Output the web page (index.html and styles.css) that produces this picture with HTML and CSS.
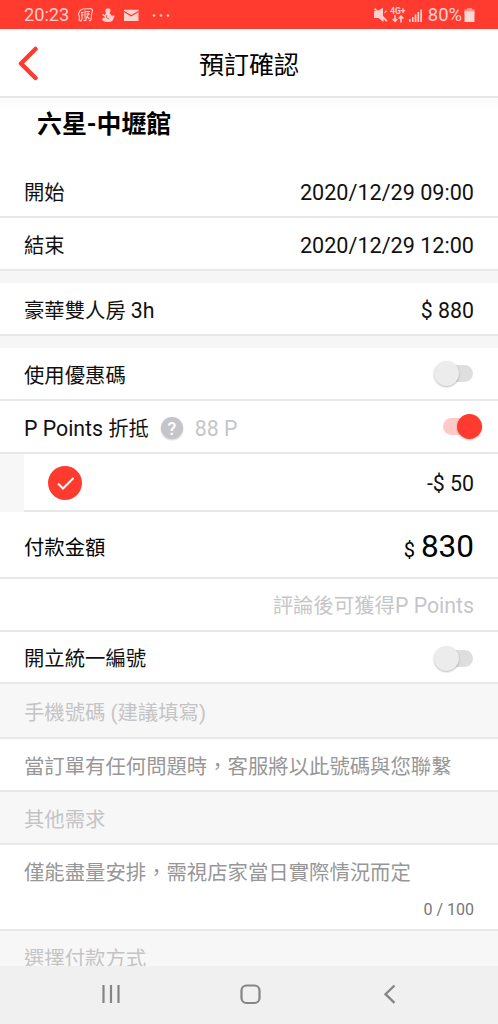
FILE: index.html
```html
<!DOCTYPE html>
<html lang="zh-Hant">
<head>
<meta charset="utf-8">
<title>預訂確認</title>
<link rel="stylesheet" href="styles.css">
</head>
<body>
<div class="screen">
  <div class="status">
    <span class="clock">20:23</span>
    <svg class="status-left" width="96" height="18" viewBox="0 0 96 18" fill="none" stroke="#ffd0cc" stroke-width="1.1">
      <path d="M3 4.500 6 3l8-.5 1.500 1.500-1 5-.5 5-2 1M3 4.500 1.500 8l1 3-.5 3 2 1 1-2M4 6.500h2.500M4 9h2.500M5 6.500V13M8 4.500v8M8.500 5.500h4.500M9 8h4M11 5v4l-2.500 5M9.500 10l3 3M6.500 14.500h3"/>
      <path fill="#ffd0cc" stroke="none" d="M31 2.300c1.600 0 2.500 1 2.500 2.200 0 1.200-.9 1.800-.7 2.700l2.500 3.300c.5-.4.600-1 .4-1.500l1.700 1c.2 1-.2 1.700-.9 2.200 0 2.400-2 3.800-5 3.800-4.300 0-6.300-1.200-6.300-2.700 0-1.200 1.300-1.900 2.900-1.900l-1.300-1.400c-1.500-.1-1.800-1.500-.8-2.300l1.900 1.400 1-2c-.4-.8-.6-1.500-.5-2.500.2-1.400 1.200-2.300 2.600-2.300z"/>
      <path stroke="#ff3b30" stroke-width=".8" d="m30 9-1 2.200 3 1.800"/>
      <path fill="#ffd0cc" stroke="none" d="M47 3.700h14.500V15H47z"/>
      <path stroke="#ff3b30" stroke-width="1.300" d="m47 5.500 7.200 4.300 7.300-4.300"/>
      <g fill="#ffd0cc" stroke="none"><circle cx="77" cy="9.500" r="1.300"/><circle cx="84" cy="9.500" r="1.300"/><circle cx="91" cy="9.500" r="1.300"/></g>
    </svg>
    <span class="spacer"></span>
    <svg class="mute" width="15" height="18" viewBox="0 0 15 18" fill="#ffd0cc"><path d="M1 5h1.800l7.700 8v3L5.500 12H1zM4.500 5 10 1.800V10.500zM11.500 6l2-2v1.500L11.500 7.500zM2.200 2 14.500 14.500l-1.300 1.300L1 3.300z"/></svg>
    <div class="network"><span>4G+</span>
      <svg width="12" height="8" viewBox="0 0 12 8" fill="none" stroke="#ffd0cc" stroke-width="1.600"><path d="M3 0v6.500M.7 4 3 6.300 5.300 4M9 7.500V1M6.700 3.500 9 1.200l2.300 2.300"/></svg>
    </div>
    <svg width="14" height="18" viewBox="0 0 14 18" fill="#ffd0cc"><path d="M0 13h1.600v3H0zM3 11h1.600v5H3zM5.700 8.500h1.700V16H5.700zM8.500 6h1.700v10H8.500zM11.300 3.500H13V16h-1.700z"/></svg>
    <span class="percent">80%</span>
    <svg class="battery" width="11" height="18" viewBox="0 0 11 18"><path fill="#ff9992" d="M3 2h5v1.500h2.500V7H.5V3.500H3z"/><path fill="#ffd8d5" d="M.5 5.500h10V16H.5z"/></svg>
  </div>
  <div class="header">
    <svg class="back" width="24" height="36" viewBox="0 0 24 36" fill="none" stroke="#ff3b30" stroke-width="4.500" stroke-linecap="round" stroke-linejoin="round"><path d="M19.500 3 5 17.500 19.500 32"/></svg>
    <span class="title">預訂確認</span>
  </div>
  <div class="store">六星-中壢館</div>
  <div class="row start"><span>開始</span><span class="date">2020/12/29 09:00</span></div>
  <div class="row end"><span>結束</span><span class="date">2020/12/29 12:00</span></div>
  <div class="gap"></div>
  <div class="row room"><span>豪華雙人房 <span class="latin">3h</span></span><span class="latin">$ 880</span></div>
  <div class="gap"></div>
  <div class="row coupon"><span class="label">使用優惠碼</span><i class="switch"></i></div>
  <div class="row points">
    <span class="label"><span class="latin">P Points</span> 折抵</span>
    <b class="help">?</b>
    <span class="balance latin">88 P</span>
    <i class="switch on"></i>
  </div>
  <div class="nested">
    <div class="row discount">
      <svg width="34" height="34" viewBox="0 0 34 34"><circle cx="17" cy="17" r="17" fill="#ff3b30"/><path d="m10 17.500 5 5 10.500-10.500" fill="none" stroke="#fff" stroke-width="2"/></svg>
      <span class="saving latin">-$ 50</span>
    </div>
  </div>
  <div class="row total"><span>付款金額</span><span class="amount"><small>$</small>830</span></div>
  <div class="row reward"><span>評論後可獲得<span class="latin">P Points</span></span></div>
  <div class="row invoice"><span>開立統一編號</span><i class="switch"></i></div>
  <div class="row section phone">手機號碼 (建議填寫)</div>
  <div class="row hint contact">當訂單有任何問題時，客服將以此號碼與您聯繫</div>
  <div class="row section other">其他需求</div>
  <div class="notes"><span class="hint">僅能盡量安排，需視店家當日實際情況而定</span><span class="counter">0 / 100</span></div>
  <div class="payment">選擇付款方式</div>
  <div class="nav">
    <svg width="22" height="24" viewBox="0 0 22 24" stroke="#858585" stroke-width="2.200"><path d="M3.500 3v18M11 3v18M18.500 3v18"/></svg>
    <svg width="22" height="24" viewBox="0 0 22 24" fill="none" stroke="#858585" stroke-width="2.200"><rect x="1.500" y="3.500" width="18" height="17.500" rx="5"/></svg>
    <svg width="22" height="24" viewBox="0 0 22 24" fill="none" stroke="#858585" stroke-width="2.300"><path d="m15.500 3.500-9 8.700 9 8.700"/></svg>
  </div>
</div>
</body>
</html>
```
FILE: styles.css
```css
* { box-sizing: border-box; }
body {
  margin: 0;
  background: #fff;
  color: #111;
  font-family: Roboto, "Noto Sans CJK TC", sans-serif;
  font-size: 20.38px;
  line-height: 30px;
}
.screen { width: 498px; height: 1024px; display: flex; flex-direction: column; overflow: hidden; }
.screen > * { flex: none; }
svg { display: block; flex: none; }
.spacer { flex: 1; }
.latin { font-size: 21.3px; }
.date { font-size: 21.6px; }

.status {
  height: 29px;
  padding: 0 23px 0 24px;
  display: flex;
  align-items: center;
  background: #ff3b30;
  color: #ffd0cc;
  font-size: 18.2px;
}
.status-left { margin-left: 8px; }
.network { width: 18px; margin: 0 2px 0 1px; display: flex; flex-direction: column; align-items: center; }
.network span { font-size: 8.5px; line-height: 8px; font-weight: 700; }
.percent { margin: 0 2px 0 5px; font-size: 18.4px; }

.header {
  height: 69px;
  padding: 6px 0 0;
  border-bottom: 2px solid #e6e6e6;
  display: grid;
  grid-template-columns: 60px 1fr 60px;
  align-items: center;
}
.back { margin: -3px 0 0 16px; }
.title { text-align: center; font-size: 25px; color: #000; }
.store {
  height: 68px;
  padding: 12px 37px 0;
  background: linear-gradient(#fafafa, #fff 12px);
  font-size: 24.9px;
  font-weight: 700;
  color: #000;
}

.row {
  padding: 0 24px;
  display: flex;
  align-items: center;
  justify-content: space-between;
  border-bottom: 2px solid #e8e8e8;
}
.start { height: 52px; padding-top: 3px; }
.end { height: 53px; padding-top: 4px; }
.gap { height: 12px; background: #f6f6f6; }
.room { height: 53px; padding-top: 4px; }
.label { margin-top: 5px; }
.coupon { height: 53px; }
.points { height: 53px; }
.help {
  width: 22px;
  height: 22px;
  margin: 2px 0 0 12px;
  border-radius: 50%;
  background: #c5c5c9;
  box-shadow: 0 1px 2px #0003;
  color: #fff;
  font-size: 18px;
  font-weight: 500;
  line-height: 23px;
  text-align: center;
}
.balance { margin: 4px 0 0 12px; flex: 1; color: #c6c6c8; }
.nested { padding-left: 24px; background: #f7f7f7; }
.discount { height: 58px; padding-top: 1px; background: #fff; }
.saving { margin-top: 2px; }
.total { height: 67px; padding-top: 7px; color: #000; }
.amount { font-size: 31.5px; }
.amount small { margin-right: 6px; font-size: 20px; }
.reward { height: 53px; justify-content: flex-end; padding-top: 3px; color: #c6c6c8; }
.invoice { height: 52px; padding-top: 3px; }
.section { background: #f7f7f7; color: #c4c4c6; }
.phone { height: 55px; padding-top: 5px; }
.contact { height: 53px; padding-top: 4px; }
.other { height: 53px; padding-top: 4px; }
.hint { color: #979797; }
.notes {
  height: 86px;
  padding: 13px 24px 0;
  display: flex;
  flex-direction: column;
  justify-content: flex-start;
  gap: 8px;
  border-bottom: 2px solid #e8e8e8;
}
.counter { align-self: flex-end; color: #777; font-size: 16px; line-height: 28px; }
.payment { height: 35px; padding: 13px 24px 0; overflow: hidden; background: #f7f7f7; color: #c4c4c6; }

.switch {
  width: 39px;
  height: 17px;
  margin-right: 1px;
  display: flex;
  align-items: center;
  border-radius: 9px;
  background: #dedede;
}
.switch::before {
  content: "";
  width: 25px;
  height: 25px;
  flex: none;
  border-radius: 50%;
  background: #ececec;
  box-shadow: 0 1px 2px #0004;
}
.switch.on { margin-right: -8px; justify-content: flex-end; background: #ffc9c8; }
.switch.on::before { background: #ff3b30; }

.nav {
  height: 58px;
  padding: 0 97px 2px 100px;
  display: flex;
  align-items: center;
  justify-content: space-between;
  background: #f0f0f0;
}
```
